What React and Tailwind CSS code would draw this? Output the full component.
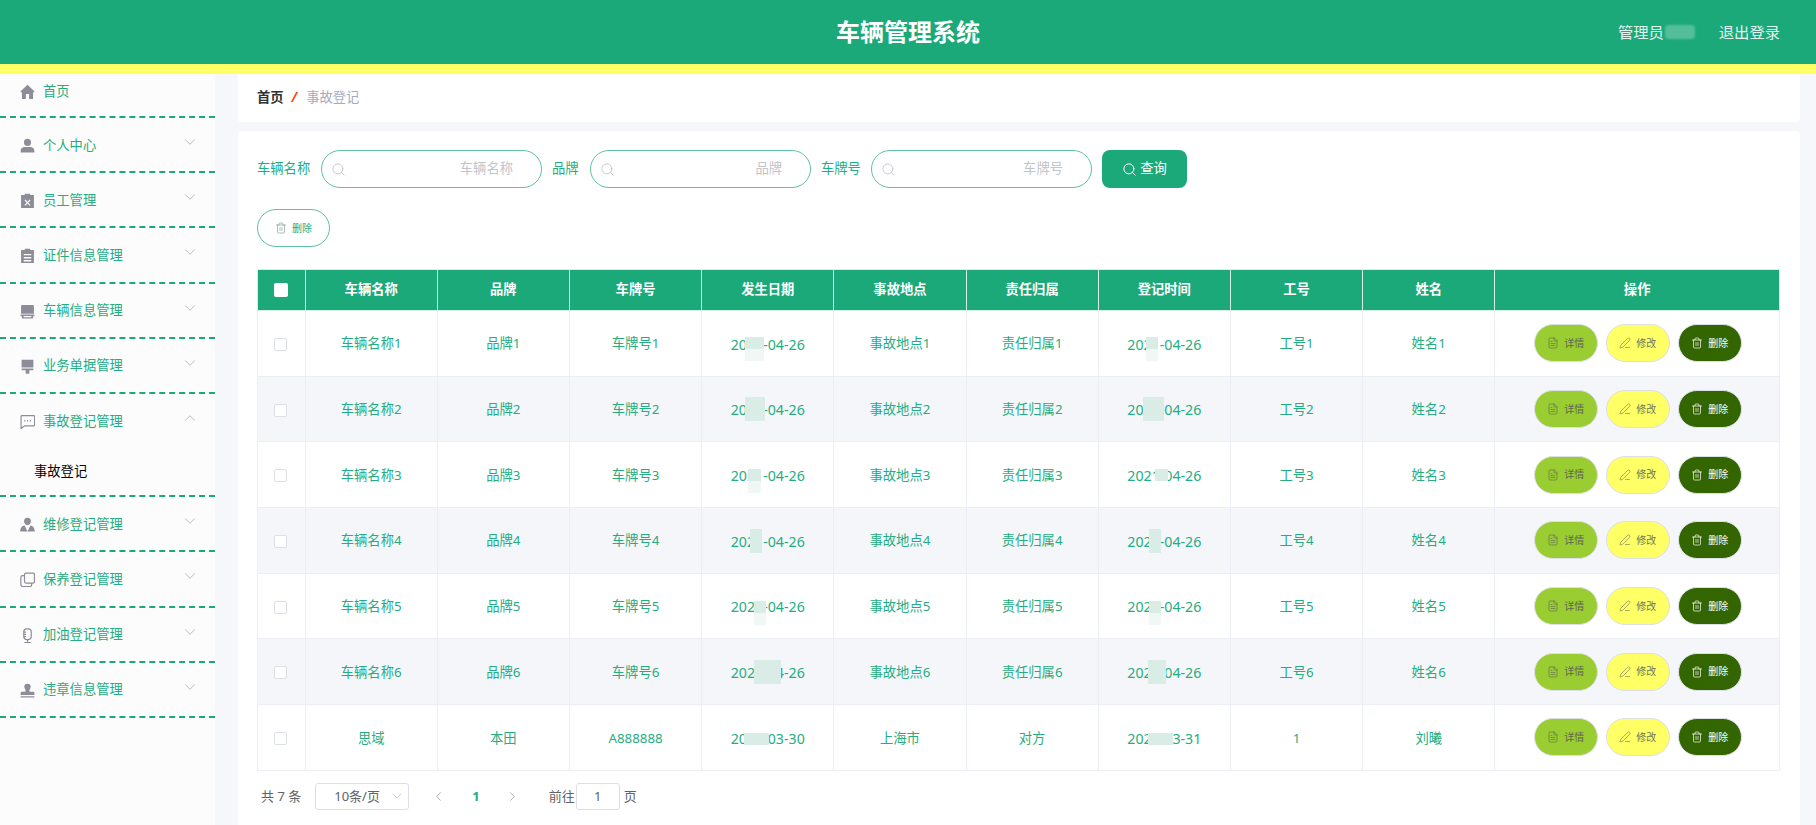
import { ChevronDown, ChevronUp, ChevronLeft, ChevronRight, Search, FileText, PenLine, Trash2 } from 'lucide-react';

const GREEN = 'text-[#24ad80]';

const icons = {
  home: <path fill="currentColor" d="M7 .8.6 6.8v.9h1.2V14h3.700V9.400h3V14h3.700V7.700h1.200v-.9z" />,
  user: <path fill="currentColor" d="M7 .8a3.300 3.300 0 1 1 0 6.600a3.300 3.300 0 0 1 0-6.600M.6 13.600v-1.800c0-2.100 2-3.300 3.700-3.300h5.400c1.700 0 3.700 1.200 3.700 3.300v1.800z" />,
  clipX: <path fill="currentColor" fillRule="evenodd" d="M4.500.6h5v1.300H13v12.100H1V1.900h3.500zM5 6l-.8.8L6.200 9l-2 2.100.8.800 2-2.100 2 2.100.8-.8L7.800 9l2-2.200L9 6 7 8.100z" />,
  clipList: <path fill="currentColor" fillRule="evenodd" d="M4.500.6h5v1.300H13v12.100H1V1.900h3.500zM3.500 5.500v1.200h7V5.500zm0 3v1.200h7V8.500zm0 2.800v1.200h7v-1.200z" />,
  printer: <path fill="currentColor" d="M2.200 1h9.600c.7 0 1.200.5 1.200 1.200V9H1V2.200C1 1.500 1.500 1 2.200 1M.6 9.800h12.800v1.600h-1.200V13.600H1.800V11.400H.6zm2.800 1.500v1h7.200v-1z" />,
  brush: <path fill="currentColor" d="M1.500.6h11v7.300h-11zm0 8.300h11v1.700H8.700v3.200H5.300v-3.200H1.500z" />,
  chat: (
    <g fill="none" stroke="currentColor" strokeWidth="1.100">
      <path d="M1.500 1.500h11.500a.6.6 0 0 1 .6.6v8.300a.6.6 0 0 1-.6.6H4.300L1 13.600V2.100a.6.6 0 0 1 .5-.6z" />
      <path d="M4 6.300h1M6.600 6.300h1M9.200 6.300h1" strokeWidth="1.300" />
    </g>
  ),
  userTie: <path fill="currentColor" d="M7 .6a3.200 3.200 0 0 1 3.200 3.300C10.200 5.700 8.800 7.600 7 7.600S3.800 5.700 3.800 3.900A3.200 3.200 0 0 1 7 .6M4.300 8 7 13.600 9.700 8c2.300.5 4 1.800 4.100 5.600H.2C.3 9.800 2 8.500 4.300 8" />,
  copy: (
    <g fill="none" stroke="currentColor" strokeWidth="1.100">
      <rect x="4.200" y="1" width="9.300" height="9.300" rx="1.400" />
      <path d="M4.200 3.400H2.400C1.400 3.400.8 4 .8 5v7c0 1 .6 1.500 1.600 1.500h7c1 0 1.500-.6 1.500-1.500v-1.700" />
    </g>
  ),
  mic: (
    <g fill="none" stroke="currentColor" strokeWidth="1.100">
      <rect x="3.500" y=".8" width="7" height="10" rx="2.800" />
      <path d="M3.700 3.900h2M3.700 6h2M3.700 8.100h2M7 11v2M4 13.500h6" />
    </g>
  ),
  stamp: <path fill="currentColor" d="M7 .6a3 3 0 0 1 3 3c0 1.500-1.200 2.300-1.200 3.600 0 .7.300 1 .9 1h2.700c.6 0 1 .5 1 1v1.900H.6V9.200c0-.5.400-1 1-1h2.700c.6 0 .9-.3.900-1 0-1.300-1.200-2.100-1.200-3.600a3 3 0 0 1 3-3M.6 12.300h12.800v1.300H.6z" />,
};

const MenuIcon = ({ name }) => (
  <svg viewBox="0 0 14 14" className="w-[15px] h-[15px] shrink-0 text-[#8d8d99]">
    {icons[name]}
  </svg>
);

const menu = [
  { label: '个人中心', icon: 'user' },
  { label: '员工管理', icon: 'clipX' },
  { label: '证件信息管理', icon: 'clipList' },
  { label: '车辆信息管理', icon: 'printer' },
  { label: '业务单据管理', icon: 'brush' },
];

const menuAfter = [
  { label: '维修登记管理', icon: 'userTie' },
  { label: '保养登记管理', icon: 'copy' },
  { label: '加油登记管理', icon: 'mic' },
  { label: '违章信息管理', icon: 'stamp' },
];

const MenuRow = ({ label, icon, open }) => (
  <div className={`h-[55.2px] flex items-center pl-[20px] pr-[16px] ${open ? '' : 'pt-[2px] border-b-2 border-dashed border-[#1ba97a]'}`}>
    <MenuIcon name={icon} />
    <span className={`ml-[8px] text-[13.3px] ${GREEN}`}>{label}</span>
    {open ? (
      <ChevronUp className="ml-auto mb-[7px] w-[18px] h-[18px] text-[#b4b6bb]" strokeWidth={1.2} />
    ) : (
      <ChevronDown className="ml-auto mb-[7px] w-[18px] h-[18px] text-[#b4b6bb]" strokeWidth={1.2} />
    )}
  </div>
);

const Sidebar = () => (
  <aside className="w-[215px] shrink-0 bg-[#fcfcfc]">
    <div className="h-[44px] flex items-start pt-[10px] pl-[20px] border-b-2 border-dashed border-[#1ba97a]">
      <MenuIcon name="home" />
      <span className={`ml-[8px] text-[13.3px] leading-[14px] ${GREEN}`}>首页</span>
    </div>
    {menu.map((m) => (
      <MenuRow key={m.label} {...m} />
    ))}
    <MenuRow label="事故登记管理" icon="chat" open />
    <div className="h-[48px] flex items-center pl-[34px] text-[13.3px] text-black border-b-2 border-dashed border-[#1ba97a]">
      事故登记
    </div>
    {menuAfter.map((m) => (
      <MenuRow key={m.label} {...m} />
    ))}
  </aside>
);

const SearchField = ({ label, labelWidth, placeholder, pr }) => (
  <div className="flex items-center">
    <span className={`${labelWidth} text-[13.3px] ${GREEN}`}>{label}</span>
    <div className={`w-[221px] h-[38px] rounded-[19px] border-[1.5px] border-[#5ec39f] bg-white flex items-center pl-[9px] ${pr}`}>
      <Search className="w-[15px] h-[15px] text-[#c0c4cc]" strokeWidth={1.4} />
      <span className="ml-auto text-[13.3px] text-[#c0c4cc]">{placeholder}</span>
    </div>
  </div>
);

// 打码区域: x / 宽 / 距行顶
const patchesA = [
  { x: 43, w: 19, y: 26, kind: 'half' },
  { x: 43, w: 20, y: 20, kind: 'full' },
  { x: 46, w: 13, y: 27, kind: 'half' },
  { x: 48, w: 12, y: 21, kind: 'full' },
  { x: 52, w: 12, y: 27, kind: 'half' },
  { x: 52, w: 27, y: 21, kind: 'full' },
  { x: 42, w: 25, y: 28, kind: 'short' },
];

const patchesB = [
  { x: 47, w: 12, y: 26, kind: 'half' },
  { x: 44, w: 21, y: 20, kind: 'full' },
  { x: 56, w: 13, y: 27, kind: 'short' },
  { x: 50, w: 12, y: 21, kind: 'full' },
  { x: 50, w: 12, y: 27, kind: 'half' },
  { x: 49, w: 18, y: 21, kind: 'full' },
  { x: 49, w: 25, y: 28, kind: 'short' },
];

const patchClass = {
  half: 'h-[24px] bg-[linear-gradient(#d9ece6_50%,#f1f7f5_50%)]',
  full: 'h-[24px] bg-[#d9ece6]',
  short: 'h-[12px] bg-[#d9ece6]',
};

const rows = [1, 2, 3, 4, 5, 6].map((n) => [
  `车辆名称${n}`, `品牌${n}`, `车牌号${n}`, '2021-04-26', `事故地点${n}`, `责任归属${n}`, '2021-04-26', `工号${n}`, `姓名${n}`,
]);
rows.push(['思域', '本田', 'A888888', '2021-03-30', '上海市', '对方', '2021-03-31', '1', '刘曦']);

const headers = ['车辆名称', '品牌', '车牌号', '发生日期', '事故地点', '责任归属', '登记时间', '工号', '姓名'];

const Cell = ({ children, patch }) => (
  <td className={`relative border border-[#ebeef5] text-center pt-[2px] ${patch ? 'text-[14.2px]' : 'text-[13.3px]'}`}>
    {children}
    {patch && (
      <span
        className={`absolute ${patchClass[patch.kind]}`}
        style={{ left: patch.x, width: patch.w, top: patch.y }}
      />
    )}
  </td>
);

const OpButton = ({ className, icon, children }) => (
  <button className={`w-[64px] h-[38px] rounded-[19px] border border-[#dcdfe6] flex items-center justify-center gap-[5px] text-[10px] ${className}`}>
    {icon}
    {children}
  </button>
);

export default function App() {
  return (
    <div className="h-screen flex flex-col overflow-hidden bg-[#f6f7fb] font-['Noto_Sans','Noto_Sans_CJK_SC',sans-serif]">
      <header className="h-[74px] shrink-0 bg-[#1ba97a] border-b-[10px] border-[#ffff66] grid grid-cols-[1fr_auto_1fr] items-center text-white">
        <div />
        <h1 className="text-[24px] font-bold">车辆管理系统</h1>
        <div className="flex items-center justify-end pr-[36px] text-[15.3px] text-[#e3f3ee]">
          <span>管理员</span>
          <span className="w-[30px] h-[14px] ml-[1px] bg-white/25 blur-[1px] rounded" />
          <span className="ml-[24px]">退出登录</span>
        </div>
      </header>

      <div className="flex flex-1 min-h-0">
        <Sidebar />
        <main className="flex-1 min-w-0 ml-[23px] mr-[16px] flex flex-col gap-[9px]">
          <div className="h-[48px] shrink-0 bg-white rounded-b flex items-center pl-[19px] text-[13.3px]">
            <span className="font-bold text-[#303133]">首页</span>
            <span className="ml-[8px] mr-[9px] font-bold italic text-[#ff4500]">/</span>
            <span className="text-[#a3abc2]">事故登记</span>
          </div>

          <section className="flex-1 bg-white rounded-t pl-[19px] pr-[20px] pt-[19px]">
            <div className="flex items-center gap-[10px]">
              <SearchField label="车辆名称" labelWidth="w-[64px]" placeholder="车辆名称" pr="pr-[28px]" />
              <SearchField label="品牌" labelWidth="w-[38px]" placeholder="品牌" pr="pr-[28px]" />
              <SearchField label="车牌号" labelWidth="w-[50px]" placeholder="车牌号" pr="pr-[28px]" />
              <button className="w-[85px] h-[38px] rounded-[8px] bg-[#1ba97a] text-white text-[13.3px] flex items-center justify-center gap-[3px]">
                <Search className="w-[15px] h-[15px]" strokeWidth={1.6} />
                查询
              </button>
            </div>

            <button className={`mt-[21px] w-[73px] h-[38px] rounded-[19px] border-[1.5px] border-[#5ec39f] bg-white text-[10px] flex items-center justify-center gap-[5px] ${GREEN}`}>
              <Trash2 className="w-[12px] h-[12px] text-[#7d9c90]" strokeWidth={1.3} />
              删除
            </button>

            <table className="mt-[22px] w-[1523px] table-fixed border-collapse">
              <colgroup>
                <col className="w-[47.6px]" />
                {headers.map((h) => (
                  <col key={h} className="w-[132.2px]" />
                ))}
                <col />
              </colgroup>
              <thead>
                <tr className="h-[41px] bg-[#1ba97a] text-white">
                  <th className="border border-[#d5efe6] p-0">
                    <span className="block w-[14px] h-[14px] mx-auto bg-white rounded-[2px]" />
                  </th>
                  {headers.map((h) => (
                    <th key={h} className="border border-[#d5efe6] text-[13.3px] font-bold p-0">{h}</th>
                  ))}
                  <th className="border border-[#d5efe6] text-[13.3px] font-bold p-0">操作</th>
                </tr>
              </thead>
              <tbody>
                {rows.map((row, i) => (
                  <tr key={i} className={`h-[65.7px] ${GREEN} ${i % 2 === 1 ? 'bg-[#f5f6fa]' : 'bg-white'}`}>
                    <td className="border border-[#ebeef5] pt-[2px]">
                      <span className="block w-[13px] h-[13px] mx-auto -translate-x-[1px] bg-white rounded-[2px] border border-[#dcdfe6]" />
                    </td>
                    {row.map((v, j) => (
                      <Cell key={j} patch={j === 3 ? patchesA[i] : j === 6 ? patchesB[i] : null}>{v}</Cell>
                    ))}
                    <td className="border border-[#ebeef5] p-0">
                      <div className="flex justify-center gap-[8px] pl-[1px]">
                        <OpButton className="bg-[#9acd32] text-[#5b6650]" icon={<FileText className="w-[12px] h-[12px]" strokeWidth={1.2} />}>详情</OpButton>
                        <OpButton className="bg-[#ffff66] text-[#74745a]" icon={<PenLine className="w-[12px] h-[12px]" strokeWidth={1.2} />}>修改</OpButton>
                        <OpButton className="bg-[#336600] text-white" icon={<Trash2 className="w-[12px] h-[12px]" strokeWidth={1.4} />}>删除</OpButton>
                      </div>
                    </td>
                  </tr>
                ))}
              </tbody>
            </table>

            <div className="mt-[12px] flex items-center pl-[4px] text-[13px] text-[#606266]">
              <span>共 7 条</span>
              <div className="ml-[14px] w-[94px] h-[27px] rounded-[3px] border border-[#dcdfe6] flex items-center pl-[18px] pr-[3px]">
                10条/页
                <ChevronDown className="ml-auto w-[16px] h-[16px] text-[#c0c4cc]" strokeWidth={1.2} />
              </div>
              <ChevronLeft className="ml-[22px] w-[15px] h-[15px] text-[#a8abb2]" strokeWidth={1.6} />
              <span className={`ml-[26px] font-bold ${GREEN}`}>1</span>
              <ChevronRight className="ml-[25px] w-[15px] h-[15px] text-[#a8abb2]" strokeWidth={1.6} />
              <span className="ml-[29px]">前往</span>
              <div className="ml-[1px] w-[44px] h-[27px] rounded-[3px] border border-[#dcdfe6] flex items-center justify-center">1</div>
              <span className="ml-[4px]">页</span>
            </div>
          </section>
        </main>
      </div>
    </div>
  );
}
